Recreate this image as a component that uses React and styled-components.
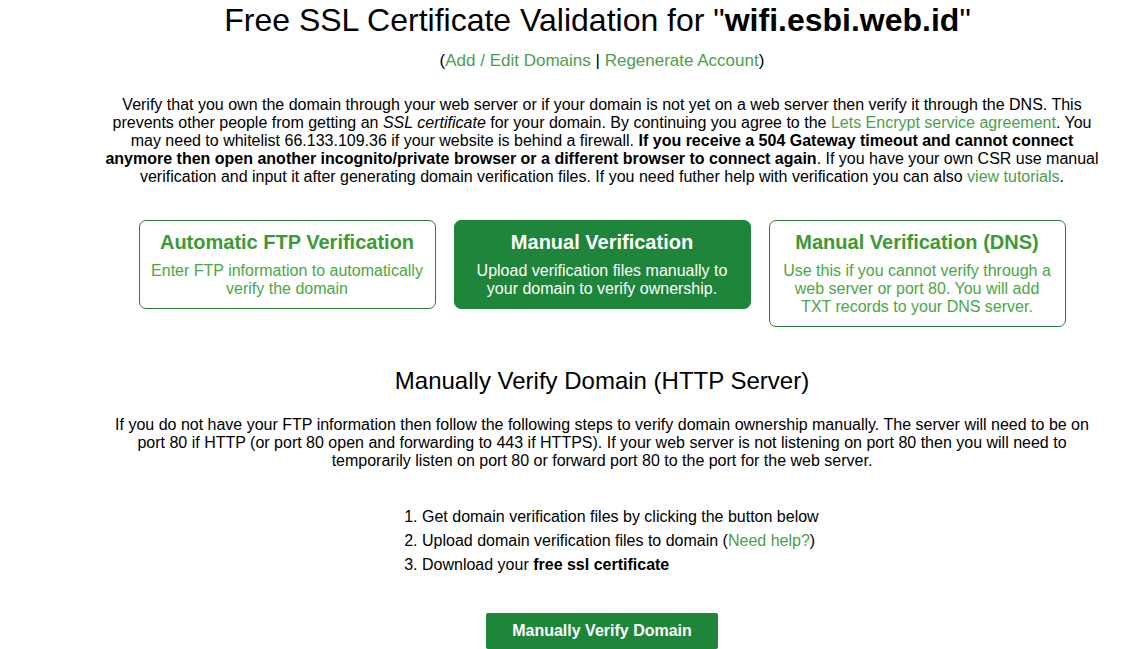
import React from 'react'
import styled, { createGlobalStyle } from 'styled-components'

const GlobalStyle = createGlobalStyle`
  body {
    margin: 0;
    background: #fff;
    font-family: 'Liberation Sans', Arial, sans-serif;
    color: #000;
  }
`

const Page = styled.div`
  width: 1000px;
  margin-left: 102px;
  text-align: center;
`

const Title = styled.h1`
  font-size: 32px;
  font-weight: normal;
  line-height: 38px;
  margin: 1px 0 0;
  padding-right: 9px;
`

const SubLinks = styled.div`
  font-size: 17px;
  line-height: 20px;
  margin-top: 12px;
  color: #000;
`

const Link = styled.a`
  color: #4a9f4a;
  text-decoration: none;
`

const Intro = styled.p`
  font-size: 16px;
  line-height: 18px;
  margin: 25px 0 0;
`

const Cards = styled.div`
  display: flex;
  justify-content: center;
  align-items: flex-start;
  gap: 18px;
  margin-top: 34px;
`

const Card = styled.div`
  width: 297px;
  box-sizing: border-box;
  border: 1px solid ${p => (p.active ? '#1e853b' : '#2e7d3c')};
  border-radius: 7px;
  background: ${p => (p.active ? '#1e853b' : '#fff')};
  padding: 9px 10px 10px;
`

const CardTitle = styled.div`
  font-size: 20px;
  font-weight: bold;
  line-height: 24px;
  color: ${p => (p.active ? '#fff' : '#3c9a35')};
`

const CardText = styled.div`
  font-size: 16px;
  line-height: 18px;
  margin-top: 8px;
  color: ${p => (p.active ? '#fff' : '#4aa844')};
`

const SectionTitle = styled.h2`
  font-size: 24px;
  font-weight: normal;
  line-height: 28px;
  margin: 40px 0 0;
`

const Body = styled.p`
  font-size: 16px;
  line-height: 18px;
  margin: 21px 0 0;
`

const Steps = styled.ol`
  text-align: left;
  font-size: 16px;
  line-height: 24px;
  margin: 35px 0 0;
  padding-left: 320px;
`

const ButtonRow = styled.div`
  margin-top: 36px;
`

const Button = styled.button`
  width: 232px;
  height: 36px;
  border: none;
  border-radius: 2px;
  background: #1e853b;
  color: #fff;
  font-family: 'Liberation Sans', Arial, sans-serif;
  font-size: 16px;
  font-weight: bold;
  cursor: pointer;
`

const cards = [
  {
    title: 'Automatic FTP Verification',
    text: 'Enter FTP information to automatically verify the domain',
  },
  {
    title: 'Manual Verification',
    text: 'Upload verification files manually to your domain to verify ownership.',
    active: true,
  },
  {
    title: 'Manual Verification (DNS)',
    text: 'Use this if you cannot verify through a web server or port 80. You will add TXT records to your DNS server.',
  },
]

export default function App() {
  return (
    <Page>
      <GlobalStyle />
      <Title>
        Free SSL Certificate Validation for "<b>wifi.esbi.web.id</b>"
      </Title>
      <SubLinks>
        (<Link href="#">Add / Edit Domains</Link> | <Link href="#">Regenerate Account</Link>)
      </SubLinks>
      <Intro>
        Verify that you own the domain through your web server or if your domain is not yet on a web
        server then verify it through the DNS. This prevents other people from getting an{' '}
        <i>SSL certificate</i> for your domain. By continuing you agree to the{' '}
        <Link href="#">Lets Encrypt service agreement</Link>. You may need to whitelist 66.133.109.36
        if your website is behind a firewall.{' '}
        <b>
          If you receive a 504 Gateway timeout and cannot connect anymore then open another
          incognito/private browser or a different browser to connect again
        </b>
        . If you have your own CSR use manual verification and input it after generating domain
        verification files. If you need futher help with verification you can also{' '}
        <Link href="#">view tutorials</Link>.
      </Intro>
      <Cards>
        {cards.map(c => (
          <Card key={c.title} active={c.active}>
            <CardTitle active={c.active}>{c.title}</CardTitle>
            <CardText active={c.active}>{c.text}</CardText>
          </Card>
        ))}
      </Cards>
      <SectionTitle>Manually Verify Domain (HTTP Server)</SectionTitle>
      <Body>
        If you do not have your FTP information then follow the following steps to verify domain
        ownership manually. The server will need to be on port 80 if HTTP (or port 80 open and
        forwarding to 443 if HTTPS). If your web server is not listening on port 80 then you will
        need to temporarily listen on port 80 or forward port 80 to the port for the web server.
      </Body>
      <Steps>
        <li>Get domain verification files by clicking the button below</li>
        <li>
          Upload domain verification files to domain (<Link href="#">Need help?</Link>)
        </li>
        <li>
          Download your <b>free ssl certificate</b>
        </li>
      </Steps>
      <ButtonRow>
        <Button>Manually Verify Domain</Button>
      </ButtonRow>
    </Page>
  )
}
